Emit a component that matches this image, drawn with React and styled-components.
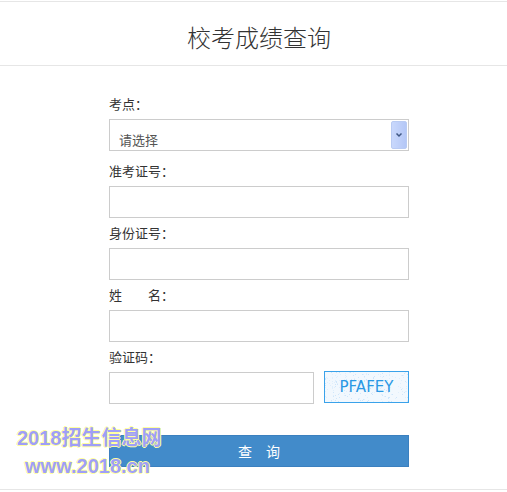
import React from 'react';
import styled, { createGlobalStyle } from 'styled-components';

const GlobalStyle = createGlobalStyle`
  html, body {
    margin: 0;
    padding: 0;
    background: #fff;
    overflow: hidden;
  }
  body {
    font-family: "Liberation Sans", "Noto Sans CJK SC", sans-serif;
    color: #333;
  }
`;

const Page = styled.div`
  position: relative;
  width: 518px;
  height: 489px;
  margin-top: 1px;
  border-top: 1px solid #e6e6e6;
  border-bottom: 1px solid #e6e6e6;
  box-sizing: border-box;
`;

const Header = styled.div`
  height: 63px;
  border-bottom: 1px solid #e6e6e6;
  display: flex;
  align-items: center;
  justify-content: center;
`;

const Title = styled.h1`
  margin: 0;
  padding-top: 6px;
  font-family: "Noto Sans CJK SC", sans-serif;
  font-size: 24px;
  font-weight: 300;
  color: #333;
`;

const Form = styled.form`
  width: 300px;
  margin: 0 auto;
  padding-top: 23px;
  display: flex;
  flex-direction: column;
`;

const Label = styled.label`
  display: block;
  height: 30px;
  line-height: 30px;
  font-family: "Noto Sans CJK SC", sans-serif;
  font-size: 13px;
  color: #333;
`;

const Input = styled.input`
  box-sizing: border-box;
  width: ${p => p.$width || '300px'};
  height: 32px;
  border: 1px solid #cccccc;
  margin: 0;
  padding: 0 8px;
  outline: none;
  font-size: 13px;
  background: #fff;
`;

const SelectBox = styled.div`
  box-sizing: border-box;
  width: 300px;
  height: 32px;
  margin-bottom: 5px;
  border: 1px solid #cccccc;
  display: flex;
  align-items: stretch;
  justify-content: space-between;
  padding: 1px;
`;

const SelectText = styled.span`
  padding: 10px 0 0 8px;
  font-family: "Noto Sans CJK SC", sans-serif;
  font-size: 13px;
  line-height: 18px;
  color: #555;
`;

const ArrowButton = styled.span`
  width: 16px;
  box-sizing: border-box;
  border: 1px solid #b9cbf3;
  border-radius: 2px;
  background: linear-gradient(to right, #c9d8fc, #b4c7f6);
  display: flex;
  align-items: center;
  justify-content: center;
`;

const CaptchaRow = styled.div`
  display: flex;
  align-items: flex-start;
  gap: 10px;
`;

const Captcha = styled.div`
  position: relative;
  box-sizing: border-box;
  width: 85px;
  height: 32px;
  margin-top: -1px;
  border: 1px solid #3aa2ea;
  background: #f2f8fe;
  display: flex;
  align-items: center;
  justify-content: center;
  overflow: hidden;
`;

const CaptchaNoise = styled.svg`
  position: absolute;
  inset: 0;
`;

const CaptchaText = styled.span`
  position: relative;
  font-family: "DejaVu Sans", sans-serif;
  font-size: 15px;
  font-weight: normal;
  color: #2a98e4;
`;

const SubmitButton = styled.button`
  margin-top: 31px;
  width: 300px;
  height: 32px;
  border: 1px solid #3b80bf;
  background: #428bca;
  color: #fff;
  font-family: "Noto Sans CJK SC", sans-serif;
  font-size: 14px;
  padding: 0;
  cursor: pointer;
`;

const Watermark = styled.div`
  position: absolute;
  left: 17px;
  top: 422px;
  width: 141px;
  text-align: center;
  font-family: "Liberation Sans", "Noto Sans CJK SC", sans-serif;
  font-weight: bold;
  font-size: 20px;
  line-height: 28px;
  color: #9f9ff7;
  text-shadow: 1px 0 0 #ffffa0, -1px 0 0 #ffffa0, 0 1px 0 #ffffa0, 0 -1px 0 #ffffa0;
  pointer-events: none;
  white-space: nowrap;
`;

const WatermarkLine = styled.div``;

function noiseDots() {
  const dots = [];
  let seed = 7;
  const rand = () => {
    seed = (seed * 9301 + 49297) % 233280;
    return seed / 233280;
  };
  for (let i = 0; i < 260; i++) {
    dots.push(
      <rect
        key={i}
        x={Math.floor(rand() * 85)}
        y={Math.floor(rand() * 32)}
        width="1"
        height="1"
        fill={rand() > 0.5 ? '#cfe6fb' : '#e0effd'}
      />
    );
  }
  return dots;
}

export default function App() {
  return (
    <>
      <GlobalStyle />
      <Page>
        <Header>
          <Title>校考成绩查询</Title>
        </Header>
        <Form onSubmit={e => e.preventDefault()}>
          <Label>考点：</Label>
          <SelectBox>
            <SelectText>请选择</SelectText>
            <ArrowButton>
              <svg width="8" height="6" viewBox="0 0 8 6">
                <path d="M1.5 1.5 L4 4 L6.5 1.5" fill="none" stroke="#3f5783" strokeWidth="1.5" />
              </svg>
            </ArrowButton>
          </SelectBox>

          <Label>准考证号：</Label>
          <Input type="text" />

          <Label>身份证号：</Label>
          <Input type="text" />

          <Label>姓　　名：</Label>
          <Input type="text" />

          <Label>验证码：</Label>
          <CaptchaRow>
            <Input type="text" $width="205px" />
            <Captcha>
              <CaptchaNoise width="85" height="32">{noiseDots()}</CaptchaNoise>
              <CaptchaText>PFAFEY</CaptchaText>
            </Captcha>
          </CaptchaRow>

          <SubmitButton type="submit">查　询</SubmitButton>
        </Form>
        <Watermark>
          <WatermarkLine>2018招生信息网</WatermarkLine>
          <WatermarkLine>www.2018.cn</WatermarkLine>
        </Watermark>
      </Page>
    </>
  );
}
